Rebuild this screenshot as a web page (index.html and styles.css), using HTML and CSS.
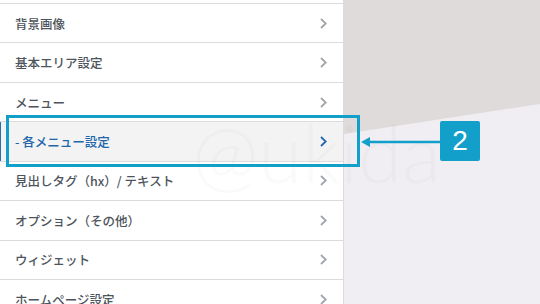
FILE: index.html
```html
<!DOCTYPE html>
<html lang="ja">
<head>
    <meta charset="UTF-8">
    <title>カスタマイズ</title>
    <link rel="stylesheet" href="styles.css">
</head>
<body>
    <div class="screen">
        <!-- カスタマイザーのサイドバー -->
        <aside class="sidebar">
            <ul class="sections">
                <li class="section"><span>背景画像</span><svg class="chevron" viewBox="0 0 7 11"><polyline points="1,1 5.8,5.5 1,10"/></svg></li>
                <li class="section"><span>基本エリア設定</span><svg class="chevron" viewBox="0 0 7 11"><polyline points="1,1 5.8,5.5 1,10"/></svg></li>
                <li class="section"><span>メニュー</span><svg class="chevron" viewBox="0 0 7 11"><polyline points="1,1 5.8,5.5 1,10"/></svg></li>
                <li class="section is-current"><span>- 各メニュー設定</span><svg class="chevron" viewBox="0 0 7 11"><polyline points="1,1 5.8,5.5 1,10"/></svg></li>
                <li class="section"><span>見出しタグ（hx）/ テキスト</span><svg class="chevron" viewBox="0 0 7 11"><polyline points="1,1 5.8,5.5 1,10"/></svg></li>
                <li class="section"><span>オプション（その他）</span><svg class="chevron" viewBox="0 0 7 11"><polyline points="1,1 5.8,5.5 1,10"/></svg></li>
                <li class="section"><span>ウィジェット</span><svg class="chevron" viewBox="0 0 7 11"><polyline points="1,1 5.8,5.5 1,10"/></svg></li>
                <li class="section"><span>ホームページ設定</span><svg class="chevron" viewBox="0 0 7 11"><polyline points="1,1 5.8,5.5 1,10"/></svg></li>
            </ul>
        </aside>

        <!-- プレビュー -->
        <main class="preview"></main>

        <!-- 透かし -->
        <div class="watermark">@ukida</div>

        <!-- 注釈 -->
        <div class="callout-box"></div>
        <svg class="callout-arrow" viewBox="0 0 82 14">
            <line x1="8" y1="7" x2="82" y2="7"/>
            <polygon points="1,7 10,2 10,12"/>
        </svg>
        <div class="callout-badge">2</div>
    </div>
</body>
</html>
```

FILE: styles.css
```css
/* リセット */
* {
    box-sizing: border-box;
    margin: 0;
    padding: 0;
}
body {
    font-family: "Noto Sans CJK JP", sans-serif;
    background-color: #ffffff;
    overflow: hidden;
}
.screen {
    position: relative;
    display: flex;
    width: 540px;
    height: 304px;
    overflow: hidden;
}
/* サイドバー */
.sidebar {
    width: 344px;
    flex-shrink: 0;
    padding-top: 3px;
    background-color: #ffffff;
    border-right: 1px solid #dcdcde;
}
.sections {
    list-style: none;
}
.section {
    display: flex;
    align-items: center;
    justify-content: space-between;
    height: 39.43px;
    padding: 0 16px 0 15px;
    border-top: 1px solid #dcdcde;
    color: #4d545b;
    font-size: 12.5px;
    font-weight: 500;
}
.section.is-current {
    background-color: #f3f3f4;
    color: #2166ab;
    box-shadow: inset 1px 0 #2271b1;
}
.chevron {
    width: 7px;
    height: 11px;
    fill: none;
    stroke: #a0a5aa;
    stroke-width: 1.8;
}
.is-current .chevron {
    stroke: #2166ab;
}
/* プレビュー */
.preview {
    position: relative;
    flex: 1;
    background-color: #f0eef3;
}
.preview::before {
    content: "";
    position: absolute;
    inset: 0;
    background-color: #dfdbda;
    clip-path: polygon(0 0, 100% 0, 100% 104px, 0 134px);
}
/* 透かし */
.watermark {
    position: absolute;
    left: 192px;
    top: 104px;
    font-family: Lato, sans-serif;
    font-weight: 300;
    font-size: 80px;
    color: rgba(110, 110, 110, 0.03);
    pointer-events: none;
}
/* 注釈 */
.callout-box {
    position: absolute;
    left: 6px;
    top: 115px;
    width: 354px;
    height: 52px;
    border: 3px solid #12a0cb;
}
.callout-arrow {
    position: absolute;
    left: 360px;
    top: 135px;
    width: 82px;
    height: 14px;
}
.callout-arrow line {
    stroke: #12a0cb;
    stroke-width: 2.5;
}
.callout-arrow polygon {
    fill: #12a0cb;
}
.callout-badge {
    position: absolute;
    left: 440px;
    top: 121px;
    width: 40px;
    height: 40px;
    display: flex;
    align-items: center;
    justify-content: center;
    background-color: #12a0cb;
    border-radius: 2px;
    color: #ffffff;
    font-family: "Liberation Sans", Arial, sans-serif;
    font-size: 28px;
}
```
